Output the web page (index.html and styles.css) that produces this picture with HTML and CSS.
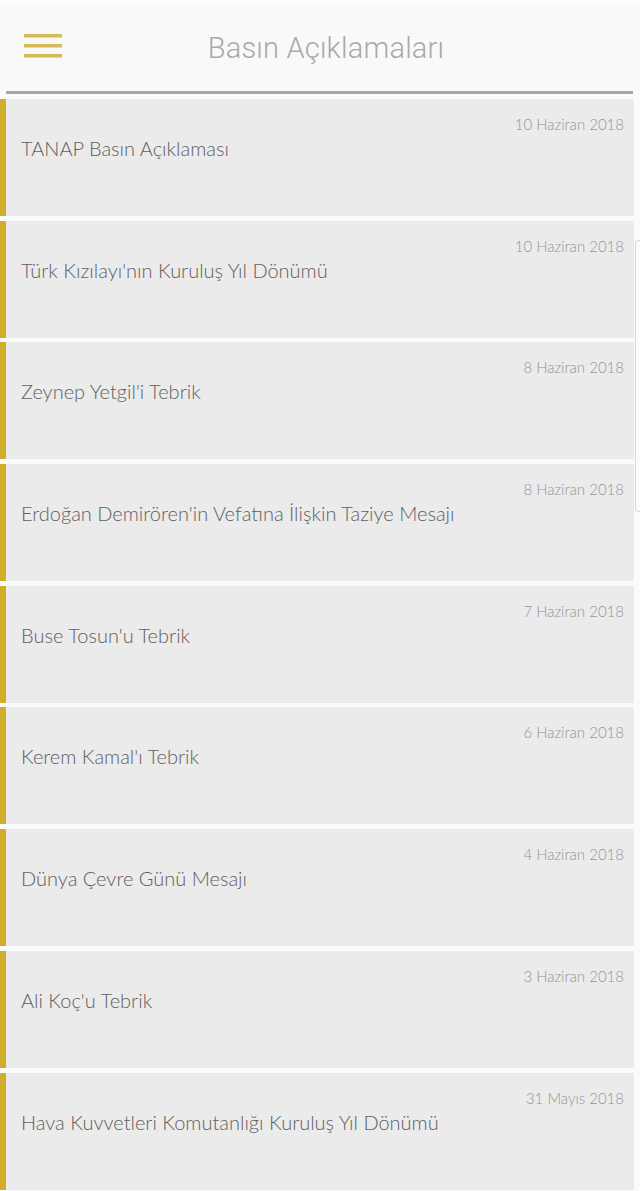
FILE: index.html
```html
<!DOCTYPE html>
<html lang="tr">
<head>
    <meta charset="UTF-8">
    <meta name="viewport" content="width=device-width, initial-scale=1.0">
    <title>Basın Açıklamaları</title>
    <link rel="stylesheet" href="styles.css">
</head>
<body>
    <header class="topbar">
        <button class="menu-btn" aria-label="Menü">
            <svg width="38" height="24" viewBox="0 0 38 24">
                <rect x="0" y="0" width="38" height="3.5" fill="#d3ba57"/>
                <rect x="0" y="10" width="38" height="3.5" fill="#d3ba57"/>
                <rect x="0" y="20" width="38" height="3.5" fill="#d3ba57"/>
            </svg>
        </button>
        <h1 class="page-title">Basın Açıklamaları</h1>
    </header>
    <div class="topbar-line"></div>

    <ul class="news-list">
        <li class="news-item">
            <span class="news-date">10 Haziran 2018</span>
            <span class="news-title">TANAP Basın Açıklaması</span>
        </li>
        <li class="news-item">
            <span class="news-date">10 Haziran 2018</span>
            <span class="news-title">Türk Kızılayı'nın Kuruluş Yıl Dönümü</span>
        </li>
        <li class="news-item">
            <span class="news-date">8 Haziran 2018</span>
            <span class="news-title">Zeynep Yetgil'i Tebrik</span>
        </li>
        <li class="news-item">
            <span class="news-date">8 Haziran 2018</span>
            <span class="news-title">Erdoğan Demirören'in Vefatına İlişkin Taziye Mesajı</span>
        </li>
        <li class="news-item">
            <span class="news-date">7 Haziran 2018</span>
            <span class="news-title">Buse Tosun'u Tebrik</span>
        </li>
        <li class="news-item">
            <span class="news-date">6 Haziran 2018</span>
            <span class="news-title">Kerem Kamal'ı Tebrik</span>
        </li>
        <li class="news-item">
            <span class="news-date">4 Haziran 2018</span>
            <span class="news-title">Dünya Çevre Günü Mesajı</span>
        </li>
        <li class="news-item">
            <span class="news-date">3 Haziran 2018</span>
            <span class="news-title">Ali Koç'u Tebrik</span>
        </li>
        <li class="news-item">
            <span class="news-date">31 Mayıs 2018</span>
            <span class="news-title">Hava Kuvvetleri Komutanlığı Kuruluş Yıl Dönümü</span>
        </li>
    </ul>

    <div class="scroll-hint"></div>
</body>
</html>
```

FILE: styles.css
```css
body {
    font-family: 'Lato', 'Open Sans', sans-serif;
    background-color: #fbfbfb;
    color: #555;
    margin: 0;
    padding: 0;
    width: 640px;
    height: 1191px;
    overflow: hidden;
    position: relative;
}

.topbar {
    height: 86px;
    margin-top: 5px;
    background-color: #f9f9f9;
    display: flex;
    align-items: center;
    position: relative;
}

.menu-btn {
    background: none;
    border: none;
    padding: 0;
    margin-left: 24px;
    margin-top: -4px;
    display: flex;
    cursor: pointer;
}

.page-title {
    position: absolute;
    left: 0;
    right: 0;
    top: 26px;
    margin: 0;
    text-align: center;
    padding-left: 12px;
    font-family: 'Roboto', sans-serif;
    font-weight: 300;
    font-size: 29px;
    color: #a9a9a9;
    letter-spacing: 0.2px;
}

.topbar-line {
    height: 3px;
    margin: 0 7px 0 6px;
    background-color: #a6a6a6;
}

.news-list {
    list-style: none;
    margin: 5px 0 0 0;
    padding: 0;
    display: flex;
    flex-direction: column;
    gap: 4.7px;
}

.news-item {
    height: 117px;
    box-sizing: border-box;
    background-color: #ebebeb;
    border-left: 6px solid #cfae2b;
    margin-right: 6px;
    padding: 16px 10px 0 15px;
    display: flex;
    flex-direction: column;
}

.news-date {
    align-self: flex-end;
    font-size: 15px;
    font-weight: 300;
    color: #959595;
    line-height: 18px;
}

.news-title {
    margin-top: 2px;
    font-size: 20px;
    font-weight: 300;
    color: #606060;
    line-height: 26px;
}

.scroll-hint {
    position: absolute;
    right: 0;
    top: 240px;
    width: 4px;
    height: 270px;
    border: 1px solid #d8d8d8;
    border-right: none;
    border-radius: 4px 0 0 4px;
}
```
